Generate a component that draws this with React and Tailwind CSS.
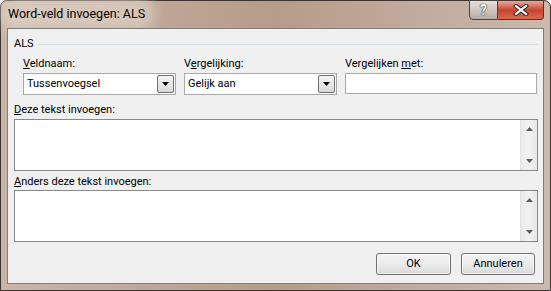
import React from 'react';

// Combo box with a Win7-style dropdown button
const Combo = ({ value, width }) => (
  <div className={`${width} h-[22px] flex items-center border border-[#a9a9a9] bg-white pl-[3px] pr-[1px]`}>
    <span className="flex-1 truncate">{value}</span>
    <div className="w-[17px] h-[18px] flex items-center justify-center border border-[#707070] rounded-[2px] bg-gradient-to-b from-[#f4f4f4] via-[#e9e9e9] to-[#d6d6d6]">
      <svg width="7" height="4" viewBox="0 0 7 4">
        <path d="M0 0h7L3.5 4z" fill="#000" />
      </svg>
    </div>
  </div>
);

// Multi-line text field with a disabled vertical scrollbar
const TextArea = () => (
  <div className="h-[52px] flex border border-[#8a8a8a] bg-white">
    <div className="flex-1" />
    <div className="w-[17px] flex flex-col items-center justify-between py-[7px] bg-gradient-to-r from-[#ebebeb] via-[#f2f2f2] to-[#e6e6e6] border-l border-[#e2e2e2]">
      <svg width="7" height="4" viewBox="0 0 7 4">
        <path d="M3.5 0L7 4H0z" fill="#5c5c5c" />
      </svg>
      <svg width="7" height="4" viewBox="0 0 7 4">
        <path d="M0 0h7L3.5 4z" fill="#5c5c5c" />
      </svg>
    </div>
  </div>
);

const Button = ({ children, width }) => (
  <button className={`${width} h-[22px] rounded-[3px] border border-[#707070] bg-gradient-to-b from-[#f2f2f2] via-[#ebebeb] to-[#d9d9d9] text-black shadow-[inset_0_0_0_1px_rgba(255,255,255,0.7)]`}>
    {children}
  </button>
);

const App = () => {
  return (
    <div
      className="w-[551px] h-[291px] flex flex-col rounded-t-[7px] border border-[#3a3330] bg-gradient-to-r from-[#c9b5a7] via-[#b69c8a] to-[#cbb9ad] text-[11px] leading-[16px] text-black"
      style={{ fontFamily: 'Roboto, "Liberation Sans", sans-serif' }}
    >
      {/* Title bar */}
      <div className="h-[27px] flex items-start justify-between">
        <div className="pl-[7px] pt-[5px] text-[12.5px]">
          <span className="rounded-full bg-[#e4d8cf]/60 shadow-[0_0_12px_10px_rgba(228,216,207,0.6)]">
            Word-veld invoegen: ALS
          </span>
        </div>
        <div className="flex -mt-px mr-[6px]">
          <div className="w-[29px] h-[20px] flex items-center justify-center rounded-bl-[4px] border border-[#4d4440] bg-gradient-to-b from-[#e6e1de] via-[#cdc5c0] to-[#b7aca6]">
            <span
              className="font-bold text-[14px] leading-none text-white"
              style={{ textShadow: '0 0 1px #333, 0 0 1px #333, 0 0 1px #333' }}
            >
              ?
            </span>
          </div>
          <div className="w-[46px] h-[20px] flex items-center justify-center rounded-br-[4px] border border-l-0 border-[#4d3430] bg-gradient-to-b from-[#e8a899] via-[#c8432c] to-[#d66a52]">
            <svg width="16" height="12" viewBox="0 0 16 12">
              <path d="M3 2l10 8M13 2L3 10" stroke="#3b2b28" strokeWidth="4.2" strokeLinecap="square" />
              <path d="M3 2l10 8M13 2L3 10" stroke="#fff" strokeWidth="2.2" strokeLinecap="square" />
            </svg>
          </div>
        </div>
      </div>

      {/* Client area */}
      <div className="flex-1 mx-[6px] mb-[6px] border border-[#7d7d7d] bg-[#f0f0f0] flex flex-col px-[6px] pt-[7px] pb-[8px]">
        {/* Group header */}
        <div className="flex items-center gap-[4px]">
          <span>ALS</span>
          <div className="flex-1 h-px bg-[#d5dfe5] mr-[-1px]" />
        </div>

        {/* Field row */}
        <div className="flex mt-[4px] pl-[9px]">
          <div className="flex flex-col">
            <span><u>V</u>eldnaam:</span>
            <div className="mt-px">
              <Combo value="Tussenvoegsel" width="w-[153px]" />
            </div>
          </div>
          <div className="flex flex-col ml-[8px]">
            <span>V<u>e</u>rgelijking:</span>
            <div className="mt-px">
              <Combo value="Gelijk aan" width="w-[153px]" />
            </div>
          </div>
          <div className="flex flex-col ml-[8px]">
            <span>Vergelijken <u>m</u>et:</span>
            <div className="mt-px w-[192px] h-[21px] border border-[#a9a9a9] bg-white" />
          </div>
        </div>

        <span className="mt-[7px]"><u>D</u>eze tekst invoegen:</span>
        <div className="mt-px mr-[-1px]">
          <TextArea />
        </div>

        <span className="mt-[3px]"><u>A</u>nders deze tekst invoegen:</span>
        <div className="mr-[-1px]">
          <TextArea />
        </div>

        <div className="mt-auto flex justify-end gap-[10px] pr-[2px]">
          <Button width="w-[75px]">OK</Button>
          <Button width="w-[74px]">Annuleren</Button>
        </div>
      </div>
    </div>
  );
};

export default App;
